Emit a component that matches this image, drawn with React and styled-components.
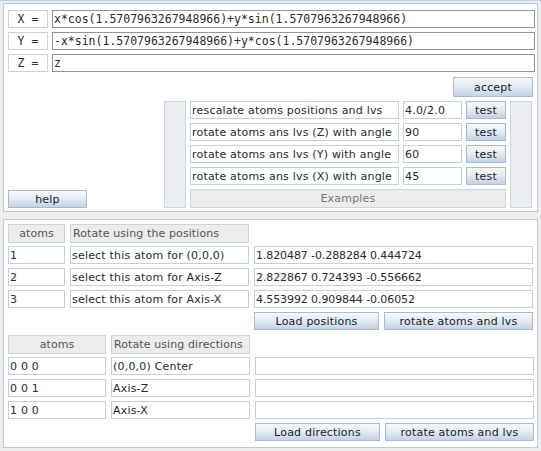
import React from 'react';
import styled, { createGlobalStyle } from 'styled-components';

const GlobalStyle = createGlobalStyle`
	html, body {
		margin: 0;
		padding: 0;
		background: #eeeeee;
	}
	* {
		box-sizing: border-box;
	}
`;

const Window = styled.div`
	width: 541px;
	height: 451px;
	background: #eeeeee;
	border-top: 1px solid #c4d2e0;
	padding: 2px 3px 3px 3px;
	display: flex;
	flex-direction: column;
	gap: 7px;
	font-family: 'DejaVu Sans', Verdana, sans-serif;
	font-size: 11px;
	letter-spacing: 0.2px;
	color: #2a2a2a;
`;

const Panel = styled.div`
	background: #fff;
	border: 1px solid #bccad8;
	height: ${({ $height }) => $height}px;
	padding: ${({ $pad }) => $pad};
	display: flex;
	flex-direction: column;
	gap: 4px;
`;

const FormulaRow = styled.div`
	display: flex;
	gap: 4px;
	height: 18px;
`;

const FormulaLabel = styled.div`
	width: 40px;
	border: 1px solid #c8d3de;
	font-family: 'DejaVu Sans Mono', monospace;
	font-size: 11.5px;
	letter-spacing: 0;
	display: flex;
	align-items: center;
	justify-content: center;
	white-space: pre;
`;

const FormulaField = styled.div`
	flex: 1;
	border: 1px solid #8f969e;
	font-family: 'DejaVu Sans Mono', monospace;
	font-size: 11.5px;
	letter-spacing: 0;
	padding-left: 1px;
	display: flex;
	align-items: center;
	white-space: pre;
`;

const AcceptRow = styled.div`
	display: flex;
	justify-content: flex-end;
	padding-right: 2px;
	margin-top: 1px;
`;

const Button = styled.div`
	width: ${({ $width }) => $width}px;
	height: ${({ $h }) => $h || 18}px;
	border: 1px solid #a9bacb;
	background: linear-gradient(#f7f9fc 0%, #e4ecf5 45%, #c3d3e6 100%);
	display: flex;
	align-items: center;
	justify-content: center;
	color: #222;
`;

const Lower = styled.div`
	flex: 1;
	display: flex;
	gap: 4px;
`;

const HelpCol = styled.div`
	flex: 1;
	display: flex;
	align-items: flex-end;
`;

const Examples = styled.div`
	display: flex;
	gap: 4px;
	padding-right: 3px;
`;

const Stub = styled.div`
	width: 22px;
	background: #ebedf0;
	border: 1px solid #cbd5df;
`;

const ExampleList = styled.div`
	display: flex;
	flex-direction: column;
	gap: 4px;
	width: 316px;
`;

const ExampleRow = styled.div`
	display: grid;
	grid-template-columns: 209px 59px 40px;
	gap: 4px;
	height: 18px;
`;

const Field = styled.div`
	border: 1px solid #c3cfdb;
	background: #fff;
	padding-left: 1px;
	letter-spacing: ${({ $numeric }) => ($numeric ? '-0.1px' : '0.2px')};
	display: flex;
	align-items: center;
	white-space: pre;
	overflow: hidden;
`;

const ExamplesBar = styled.div`
	height: 19px;
	background: #ececec;
	border: 1px solid #cbd5df;
	color: #777;
	display: flex;
	align-items: center;
	justify-content: center;
`;

const Group = styled.div`
	display: grid;
	grid-template-columns: ${({ $cols }) => $cols} 279px;
	column-gap: 5px;
	row-gap: 4px;
	grid-auto-rows: 18px;
	margin-bottom: 1px;
`;

const Header = styled.div`
	height: 19px;
	background: #ececec;
	border: 1px solid #cbd5df;
	color: #555;
	letter-spacing: 0.1px;
	display: flex;
	align-items: center;
	justify-content: ${({ $center }) => ($center ? 'center' : 'flex-start')};
	padding-left: ${({ $center }) => ($center ? 0 : 2)}px;
	white-space: pre;
`;

const ButtonBar = styled.div`
	grid-column: 3;
	display: flex;
	gap: 5px;
`;

const examples = [
	['rescalate atoms positions and lvs', '4.0/2.0'],
	['rotate atoms ans lvs (Z) with angle', '90'],
	['rotate atoms ans lvs (Y) with angle', '60'],
	['rotate atoms ans lvs (X) with angle', '45'],
];

const positions = [
	['1', 'select this atom for (0,0,0)', '1.820487 -0.288284 0.444724'],
	['2', 'select this atom for Axis-Z', '2.822867 0.724393 -0.556662'],
	['3', 'select this atom for Axis-X', '4.553992 0.909844 -0.06052'],
];

const directions = [
	['0 0 0', '(0,0,0) Center', ''],
	['0 0 1', 'Axis-Z', ''],
	['1 0 0', 'Axis-X', ''],
];

const RotateGroup = ({ cols, title, rows, loadLabel }) => (
	<Group $cols={cols}>
		<Header $center>atoms</Header>
		<Header>{title}</Header>
		<div />
		{rows.map(([atom, desc, value]) => (
			<React.Fragment key={atom}>
				<Field>{atom}</Field>
				<Field>{desc}</Field>
				<Field $numeric>{value}</Field>
			</React.Fragment>
		))}
		<ButtonBar>
			<Button $width={125}>{loadLabel}</Button>
			<Button $width={149}>rotate atoms and lvs</Button>
		</ButtonBar>
	</Group>
);

export default function App() {
	return (
		<>
			<GlobalStyle />
			<Window>
				<Panel $height={209} $pad="6px 2px 3px 4px">
					<FormulaRow>
						<FormulaLabel>X =</FormulaLabel>
						<FormulaField>x*cos(1.5707963267948966)+y*sin(1.5707963267948966)</FormulaField>
					</FormulaRow>
					<FormulaRow>
						<FormulaLabel>Y =</FormulaLabel>
						<FormulaField>-x*sin(1.5707963267948966)+y*cos(1.5707963267948966)</FormulaField>
					</FormulaRow>
					<FormulaRow>
						<FormulaLabel>Z =</FormulaLabel>
						<FormulaField>z</FormulaField>
					</FormulaRow>
					<AcceptRow>
						<Button $width={80} $h={20}>accept</Button>
					</AcceptRow>
					<Lower>
						<HelpCol>
							<Button $width={79}>help</Button>
						</HelpCol>
						<Examples>
							<Stub />
							<ExampleList>
								{examples.map(([label, value]) => (
									<ExampleRow key={label}>
										<Field>{label}</Field>
										<Field>{value}</Field>
										<Button $width={40}>test</Button>
									</ExampleRow>
								))}
								<ExamplesBar>Examples</ExamplesBar>
							</ExampleList>
							<Stub />
						</Examples>
					</Lower>
				</Panel>
				<Panel $height={230} $pad="4px 4px 4px 4px">
					<RotateGroup
						cols="57px 179px"
						title="Rotate using the positions"
						rows={positions}
						loadLabel="Load positions"
					/>
					<RotateGroup
						cols="98px 139px"
						title="Rotate using directions"
						rows={directions}
						loadLabel="Load directions"
					/>
				</Panel>
			</Window>
		</>
	);
}
